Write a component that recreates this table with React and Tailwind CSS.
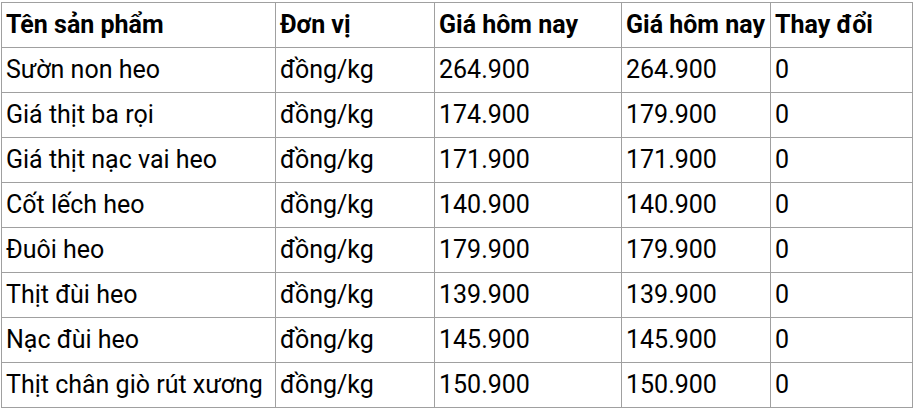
const rows = [
  ['Sườn non heo', 'đồng/kg', '264.900', '264.900', '0'],
  ['Giá thịt ba rọi', 'đồng/kg', '174.900', '179.900', '0'],
  ['Giá thịt nạc vai heo', 'đồng/kg', '171.900', '171.900', '0'],
  ['Cốt lếch heo', 'đồng/kg', '140.900', '140.900', '0'],
  ['Đuôi heo', 'đồng/kg', '179.900', '179.900', '0'],
  ['Thịt đùi heo', 'đồng/kg', '139.900', '139.900', '0'],
  ['Nạc đùi heo', 'đồng/kg', '145.900', '145.900', '0'],
  ['Thịt chân giò rút xương', 'đồng/kg', '150.900', '150.900', '0'],
]

const headers = ['Tên sản phẩm', 'Đơn vị', 'Giá hôm nay', 'Giá hôm nay', 'Thay đổi']
const widths = ['w-[274px]', 'w-[159px]', 'w-[187px]', 'w-[149px]', 'w-[142px]']

export default function App() {
  return (
    <div className="bg-white w-[914px] h-[409px] pl-[1px] pt-[2px] font-['Roboto',sans-serif] text-black">
      <table className="border-collapse table-fixed w-[911px] text-[25px] leading-none">
        <thead>
          <tr className="h-[45px]">
            {headers.map((h, i) => (
              <th
                key={i}
                className={`${widths[i]} border border-[#a0a0a0] px-[4px] pb-[2px] text-left font-bold whitespace-nowrap`}
              >
                {h}
              </th>
            ))}
          </tr>
        </thead>
        <tbody>
          {rows.map((r, i) => (
            <tr key={i} className="h-[45px]">
              {r.map((c, j) => (
                <td key={j} className="border border-[#a0a0a0] px-[4px] pb-[2px] whitespace-nowrap">
                  {c}
                </td>
              ))}
            </tr>
          ))}
        </tbody>
      </table>
    </div>
  )
}
